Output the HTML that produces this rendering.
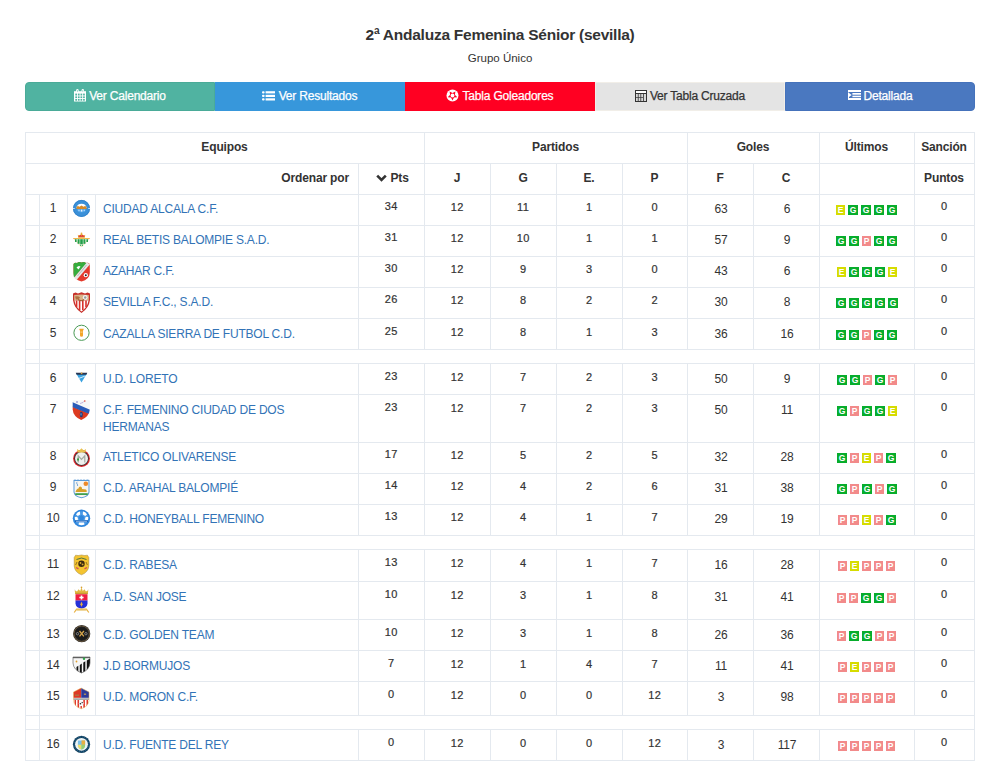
<!DOCTYPE html>
<html><head><meta charset="utf-8">
<style>
html,body{margin:0;padding:0;background:#fff;}
body{width:993px;height:764px;position:relative;overflow:hidden;font-family:"Liberation Sans",sans-serif;color:#333;}
.title{position:absolute;left:25px;width:950px;top:25px;text-align:center;font-weight:bold;font-size:15.5px;letter-spacing:-0.25px;line-height:20px;color:#333;}
.sub{position:absolute;left:25px;width:950px;top:50px;text-align:center;font-size:11.5px;line-height:16px;color:#333;}
.btn{position:absolute;top:82px;height:29px;width:190px;box-sizing:border-box;color:#fff;font-size:12px;letter-spacing:-0.2px;line-height:26px;text-align:center;border:1px solid;white-space:nowrap;-webkit-text-stroke:0.25px currentColor;}
.btn svg{vertical-align:middle;position:relative;top:-1px;margin-right:3px;}
.hl{position:absolute;height:1px;background:#e4e9ef;}
.vl{position:absolute;width:1px;background:#e4e9ef;}
.th,.td,.rn{position:absolute;white-space:nowrap;}
.th{font-weight:bold;font-size:12px;letter-spacing:-0.15px;line-height:14px;color:#333;}
.td{font-size:12px;letter-spacing:-0.2px;line-height:14px;color:#333;}
.nm{position:absolute;font-size:12px;letter-spacing:-0.2px;line-height:17px;padding:0 8px 0 8px;box-sizing:border-box;color:#3273b6;}
.rn{font-size:11px;letter-spacing:0.5px;padding-left:0.5px;box-sizing:border-box;line-height:14px;color:#333;-webkit-text-stroke:0.2px #333;}
.c{text-align:center;}
.r{text-align:right;}
.bd{position:absolute;width:9px;height:10px;color:#fff;font-weight:bold;font-size:8.5px;line-height:10px;text-align:center;}
.logo{position:absolute;left:67px;width:28px;}
.chev{vertical-align:middle;position:relative;top:-1px;}
</style></head><body>
<div class="title">2ª Andaluza Femenina Sénior (sevilla)</div>
<div class="sub">Grupo Único</div>
<div class="btn" style="left:25px;background:#50b3a1;border-color:#4aab98;border-radius:4px 0 0 4px;"><svg width="12" height="13" viewBox="0 0 12 13"><path d="M0 2.2 H12 V12.5 H0Z" fill="#fff"/><g fill="#50b3a1"><rect x="1.3" y="4.6" width="1.7" height="1.9"/><rect x="3.9" y="4.6" width="1.7" height="1.9"/><rect x="6.5" y="4.6" width="1.7" height="1.9"/><rect x="9.1" y="4.6" width="1.7" height="1.9"/><rect x="1.3" y="7.4" width="1.7" height="1.6"/><rect x="3.9" y="7.4" width="1.7" height="1.6"/><rect x="6.5" y="7.4" width="1.7" height="1.6"/><rect x="9.1" y="7.4" width="1.7" height="1.6"/><rect x="1.3" y="9.9" width="1.7" height="1.8"/><rect x="3.9" y="9.9" width="1.7" height="1.8"/><rect x="6.5" y="9.9" width="1.7" height="1.8"/><rect x="9.1" y="9.9" width="1.7" height="1.8"/></g><rect x="2.2" y="0" width="2.4" height="3.6" rx="1.2" fill="#fff"/><rect x="7.6" y="0" width="2.4" height="3.6" rx="1.2" fill="#fff"/><rect x="3" y="1" width="0.8" height="1.8" fill="#8fd0c4"/><rect x="8.4" y="1" width="0.8" height="1.8" fill="#8fd0c4"/></svg>Ver Calendario</div>
<div class="btn" style="left:215px;background:#3797db;border-color:#3797db;"><svg width="13" height="10" viewBox="0 0 13 10" style="top:-1px;left:-1px"><g fill="#fff"><rect x="0" y="0.2" width="2.6" height="2.2" rx="1"/><rect x="0" y="3.8" width="2.6" height="2.2" rx="1"/><rect x="0" y="7.3" width="2.6" height="2.2" rx="1"/><rect x="3.6" y="0.2" width="9.4" height="2.2"/><rect x="3.6" y="3.8" width="9.4" height="2.2"/><rect x="3.6" y="7.3" width="9.4" height="2.2"/></g></svg>Ver Resultados</div>
<div class="btn" style="left:405px;background:#ff0022;border-color:#ff0022;"><svg width="13" height="13" viewBox="0 0 13 13" style="left:-1px"><circle cx="6.5" cy="6.5" r="6" fill="#fff"/><path d="M6.50 11.60 L5.03 8.62 L1.74 8.15 L4.12 5.83 L3.56 2.55 L6.50 4.10 L9.44 2.55 L8.88 5.83 L11.26 8.15 L7.97 8.62Z" fill="#ff0022"/><circle cx="6.5" cy="6.5" r="1.9" fill="#fff"/></svg>Tabla Goleadores</div>
<div class="btn" style="left:595px;background:#e4e4e4;border-color:#f1eee8;color:#333;"><svg width="12" height="12" viewBox="0 0 12 12"><rect x="0" y="0" width="12" height="12" fill="#333"/><rect x="1" y="1" width="10" height="2" fill="#fff"/><g fill="#d8d8d8"><rect x="1" y="4" width="1.8" height="3.3"/><rect x="3.6" y="4" width="1.8" height="3.3"/><rect x="6.2" y="4" width="1.8" height="3.3"/><rect x="8.8" y="4" width="2.2" height="7"/><rect x="1" y="8" width="1.8" height="3"/><rect x="3.6" y="8" width="1.8" height="3"/><rect x="6.2" y="8" width="1.8" height="3"/></g></svg>Ver Tabla Cruzada</div>
<div class="btn" style="left:785px;background:#4a78c0;border-color:#4572bb;border-radius:0 4px 4px 0;"><svg width="13" height="10" viewBox="0 0 13 10" style="top:-1.5px"><g fill="#fff"><rect x="0" y="0" width="13" height="2"/><rect x="4.4" y="3" width="8.6" height="1.7"/><rect x="4.4" y="5.7" width="8.6" height="1.5"/><rect x="0" y="8" width="13" height="2"/><rect x="0" y="2.5" width="1" height="5.5"/><path d="M1 3 L3.6 5 L1 7Z"/></g></svg>Detallada</div>
<div class="hl" style="top:132px;left:25px;width:950px"></div>
<div class="hl" style="top:163px;left:25px;width:950px"></div>
<div class="hl" style="top:194px;left:25px;width:950px"></div>
<div class="vl" style="left:25px;top:132px;height:32px"></div>
<div class="vl" style="left:424px;top:132px;height:32px"></div>
<div class="vl" style="left:687px;top:132px;height:32px"></div>
<div class="vl" style="left:819px;top:132px;height:32px"></div>
<div class="vl" style="left:914px;top:132px;height:32px"></div>
<div class="vl" style="left:974px;top:132px;height:32px"></div>
<div class="vl" style="left:25px;top:163px;height:32px"></div>
<div class="vl" style="left:358px;top:163px;height:32px"></div>
<div class="vl" style="left:424px;top:163px;height:32px"></div>
<div class="vl" style="left:490px;top:163px;height:32px"></div>
<div class="vl" style="left:556px;top:163px;height:32px"></div>
<div class="vl" style="left:622px;top:163px;height:32px"></div>
<div class="vl" style="left:687px;top:163px;height:32px"></div>
<div class="vl" style="left:753px;top:163px;height:32px"></div>
<div class="vl" style="left:819px;top:163px;height:32px"></div>
<div class="vl" style="left:914px;top:163px;height:32px"></div>
<div class="vl" style="left:974px;top:163px;height:32px"></div>
<div class="th c" style="left:25px;width:399px;top:140px;">Equipos</div>
<div class="th c" style="left:424px;width:263px;top:140px;">Partidos</div>
<div class="th c" style="left:687px;width:132px;top:140px;">Goles</div>
<div class="th c" style="left:819px;width:95px;top:140px;">Últimos</div>
<div class="th c" style="left:914px;width:60px;top:140px;">Sanción</div>
<div class="th r" style="left:25px;width:333px;top:171px;padding-right:9px;box-sizing:border-box;">Ordenar por</div>
<div class="th c" style="left:358px;width:66px;top:171px;padding-left:2px;box-sizing:border-box;"><svg class="chev" width="11" height="8" viewBox="0 0 11 8" style="margin-right:1px;left:1px"><path d="M1.2 1.6 L5.5 5.9 L9.8 1.6" fill="none" stroke="#333" stroke-width="2.6"/></svg> Pts</div>
<div class="th c" style="left:424px;width:66px;top:171px;">J</div>
<div class="th c" style="left:490px;width:66px;top:171px;">G</div>
<div class="th c" style="left:556px;width:66px;top:171px;">E.</div>
<div class="th c" style="left:622px;width:65px;top:171px;">P</div>
<div class="th c" style="left:687px;width:66px;top:171px;">F</div>
<div class="th c" style="left:753px;width:66px;top:171px;">C</div>
<div class="th c" style="left:914px;width:60px;top:171px;">Puntos</div>
<div class="hl" style="top:225px;left:25px;width:950px"></div>
<div class="vl" style="left:25px;top:194px;height:32px"></div>
<div class="vl" style="left:39px;top:194px;height:32px"></div>
<div class="vl" style="left:67px;top:194px;height:32px"></div>
<div class="vl" style="left:95px;top:194px;height:32px"></div>
<div class="vl" style="left:358px;top:194px;height:32px"></div>
<div class="vl" style="left:424px;top:194px;height:32px"></div>
<div class="vl" style="left:490px;top:194px;height:32px"></div>
<div class="vl" style="left:556px;top:194px;height:32px"></div>
<div class="vl" style="left:622px;top:194px;height:32px"></div>
<div class="vl" style="left:687px;top:194px;height:32px"></div>
<div class="vl" style="left:753px;top:194px;height:32px"></div>
<div class="vl" style="left:819px;top:194px;height:32px"></div>
<div class="vl" style="left:914px;top:194px;height:32px"></div>
<div class="vl" style="left:974px;top:194px;height:32px"></div>
<div class="td c" style="left:39px;width:28px;top:201px;">1</div>
<div class="nm" style="left:95px;width:263px;top:201px;">CIUDAD ALCALA C.F.</div>
<div class="rn c" style="left:358px;width:66px;top:199px;">34</div>
<div class="rn c" style="left:424px;width:66px;top:200px;">12</div>
<div class="rn c" style="left:490px;width:66px;top:200px;">11</div>
<div class="rn c" style="left:556px;width:66px;top:200px;">1</div>
<div class="rn c" style="left:622px;width:65px;top:200px;">0</div>
<div class="td c" style="left:688px;width:66px;top:202px;">63</div>
<div class="td c" style="left:754px;width:66px;top:202px;">6</div>
<div class="rn c" style="left:914px;width:60px;top:199px;">0</div>
<div class="bd" style="left:836px;width:9px;top:205px;background:#d6dc00">E</div>
<div class="bd" style="left:848px;width:10px;top:205px;background:#07ad2c">G</div>
<div class="bd" style="left:861px;width:10px;top:205px;background:#07ad2c">G</div>
<div class="bd" style="left:874px;width:10px;top:205px;background:#07ad2c">G</div>
<div class="bd" style="left:887px;width:10px;top:205px;background:#07ad2c">G</div>
<svg class="logo" style="top:194px" width="28" height="31" viewBox="0 0 28 31"><circle cx="14.5" cy="14.4" r="8.5" fill="#3a90d8"/><circle cx="14.5" cy="14.4" r="8" fill="none" stroke="#2f7fc8" stroke-width="0.8"/><path d="M9.3 14 A5.3 5.3 0 0 1 19.7 14Z" fill="#fff"/><path d="M9.5 12.8 L11 12 L12.5 12.8 L14.5 11.4 L16.5 12.8 L18 12 L19.5 12.8 V15.2 H9.5Z" fill="#d48a2a"/><path d="M9.6 15.2 H19.4 A5.1 4.6 0 0 1 9.6 15.2Z" fill="#4aa0e8"/><rect x="13.8" y="15.6" width="1.6" height="2" fill="#eaf4ff"/><rect x="11.4" y="15.6" width="1.2" height="1.6" fill="#bfe0ff"/><rect x="16.6" y="15.6" width="1.2" height="1.6" fill="#bfe0ff"/><rect x="5.8" y="14" width="2" height="0.8" fill="#e8f3ff"/><rect x="21.2" y="14" width="2" height="0.8" fill="#e8f3ff"/></svg>
<div class="hl" style="top:256px;left:25px;width:950px"></div>
<div class="vl" style="left:25px;top:225px;height:32px"></div>
<div class="vl" style="left:39px;top:225px;height:32px"></div>
<div class="vl" style="left:67px;top:225px;height:32px"></div>
<div class="vl" style="left:95px;top:225px;height:32px"></div>
<div class="vl" style="left:358px;top:225px;height:32px"></div>
<div class="vl" style="left:424px;top:225px;height:32px"></div>
<div class="vl" style="left:490px;top:225px;height:32px"></div>
<div class="vl" style="left:556px;top:225px;height:32px"></div>
<div class="vl" style="left:622px;top:225px;height:32px"></div>
<div class="vl" style="left:687px;top:225px;height:32px"></div>
<div class="vl" style="left:753px;top:225px;height:32px"></div>
<div class="vl" style="left:819px;top:225px;height:32px"></div>
<div class="vl" style="left:914px;top:225px;height:32px"></div>
<div class="vl" style="left:974px;top:225px;height:32px"></div>
<div class="td c" style="left:39px;width:28px;top:232px;">2</div>
<div class="nm" style="left:95px;width:263px;top:232px;">REAL BETIS BALOMPIE S.A.D.</div>
<div class="rn c" style="left:358px;width:66px;top:230px;">31</div>
<div class="rn c" style="left:424px;width:66px;top:231px;">12</div>
<div class="rn c" style="left:490px;width:66px;top:231px;">10</div>
<div class="rn c" style="left:556px;width:66px;top:231px;">1</div>
<div class="rn c" style="left:622px;width:65px;top:231px;">1</div>
<div class="td c" style="left:688px;width:66px;top:233px;">57</div>
<div class="td c" style="left:754px;width:66px;top:233px;">9</div>
<div class="rn c" style="left:914px;width:60px;top:230px;">0</div>
<div class="bd" style="left:836px;width:10px;top:236px;background:#07ad2c">G</div>
<div class="bd" style="left:849px;width:10px;top:236px;background:#07ad2c">G</div>
<div class="bd" style="left:862px;width:9px;top:236px;background:#f28a8a">P</div>
<div class="bd" style="left:874px;width:10px;top:236px;background:#07ad2c">G</div>
<div class="bd" style="left:887px;width:10px;top:236px;background:#07ad2c">G</div>
<svg class="logo" style="top:225px" width="28" height="31" viewBox="0 0 28 31"><path d="M11.2 12.8 L10.8 9.8 L12.5 10.8 L14.5 8.2 L16.5 10.8 L18.2 9.8 L17.8 12.8Z" fill="#e8a030"/><path d="M11.5 11.8 Q12.8 8.8 14.5 11 Q16.2 8.8 17.5 11.8Z" fill="#e02a3a"/><circle cx="14.5" cy="8.3" r="0.9" fill="#e8b040"/><path d="M6 13 H23 L14.5 22Z" fill="#f7f4ec"/><path d="M6 13 H23 V14 H6Z" fill="#f0b850"/><path d="M6 13 L14.5 22 L23 13" fill="none" stroke="#f3cf8a" stroke-width="0.6"/><g fill="#22a04a"><rect x="8" y="14.2" width="1.6" height="2.8"/><rect x="10.6" y="14.2" width="2" height="4.6"/><rect x="13.2" y="14.2" width="2.6" height="5"/><rect x="16.4" y="14.2" width="2" height="4.6"/><rect x="19.4" y="14.2" width="1.6" height="2.8"/><rect x="13.2" y="19.6" width="0.9" height="1.4"/><rect x="14.9" y="19.6" width="0.9" height="1.4"/></g></svg>
<div class="hl" style="top:287px;left:25px;width:950px"></div>
<div class="vl" style="left:25px;top:256px;height:32px"></div>
<div class="vl" style="left:39px;top:256px;height:32px"></div>
<div class="vl" style="left:67px;top:256px;height:32px"></div>
<div class="vl" style="left:95px;top:256px;height:32px"></div>
<div class="vl" style="left:358px;top:256px;height:32px"></div>
<div class="vl" style="left:424px;top:256px;height:32px"></div>
<div class="vl" style="left:490px;top:256px;height:32px"></div>
<div class="vl" style="left:556px;top:256px;height:32px"></div>
<div class="vl" style="left:622px;top:256px;height:32px"></div>
<div class="vl" style="left:687px;top:256px;height:32px"></div>
<div class="vl" style="left:753px;top:256px;height:32px"></div>
<div class="vl" style="left:819px;top:256px;height:32px"></div>
<div class="vl" style="left:914px;top:256px;height:32px"></div>
<div class="vl" style="left:974px;top:256px;height:32px"></div>
<div class="td c" style="left:39px;width:28px;top:263px;">3</div>
<div class="nm" style="left:95px;width:263px;top:263px;">AZAHAR C.F.</div>
<div class="rn c" style="left:358px;width:66px;top:261px;">30</div>
<div class="rn c" style="left:424px;width:66px;top:262px;">12</div>
<div class="rn c" style="left:490px;width:66px;top:262px;">9</div>
<div class="rn c" style="left:556px;width:66px;top:262px;">3</div>
<div class="rn c" style="left:622px;width:65px;top:262px;">0</div>
<div class="td c" style="left:688px;width:66px;top:264px;">43</div>
<div class="td c" style="left:754px;width:66px;top:264px;">6</div>
<div class="rn c" style="left:914px;width:60px;top:261px;">0</div>
<div class="bd" style="left:837px;width:9px;top:267px;background:#d6dc00">E</div>
<div class="bd" style="left:849px;width:10px;top:267px;background:#07ad2c">G</div>
<div class="bd" style="left:862px;width:10px;top:267px;background:#07ad2c">G</div>
<div class="bd" style="left:875px;width:10px;top:267px;background:#07ad2c">G</div>
<div class="bd" style="left:888px;width:9px;top:267px;background:#d6dc00">E</div>
<svg class="logo" style="top:256px" width="28" height="31" viewBox="0 0 28 31"><path d="M6.5 8 Q8 6 10 7 Q12 5.5 14.5 6.5 Q17 5.5 19 7 Q21 6 22.8 8 V17 Q22.5 23.5 14.5 25.5 Q6.5 23.5 6.5 17Z" fill="#e43a2c"/><path d="M6.5 8 Q8 6 10 7 Q12 5.5 14.5 6.5 Q17 5.5 19 7 L20.5 6.8 L7 21.5 Q6.5 19.5 6.5 17Z" fill="#35ad3e"/><path d="M19.8 6.5 L23 8.2 L9.5 24 L7 21.8Z" fill="#e6e6e6"/><path d="M19.5 9 L10.5 20" stroke="#777" stroke-width="0.7" stroke-dasharray="0.8 0.6"/><circle cx="18.8" cy="19.2" r="2.1" fill="#fff"/><circle cx="18.8" cy="19.2" r="1" fill="#222"/><path d="M9.5 11.5 Q11.5 9 13.5 10.5 L11.5 13.5Z" fill="#fff"/></svg>
<div class="hl" style="top:318px;left:25px;width:950px"></div>
<div class="vl" style="left:25px;top:287px;height:32px"></div>
<div class="vl" style="left:39px;top:287px;height:32px"></div>
<div class="vl" style="left:67px;top:287px;height:32px"></div>
<div class="vl" style="left:95px;top:287px;height:32px"></div>
<div class="vl" style="left:358px;top:287px;height:32px"></div>
<div class="vl" style="left:424px;top:287px;height:32px"></div>
<div class="vl" style="left:490px;top:287px;height:32px"></div>
<div class="vl" style="left:556px;top:287px;height:32px"></div>
<div class="vl" style="left:622px;top:287px;height:32px"></div>
<div class="vl" style="left:687px;top:287px;height:32px"></div>
<div class="vl" style="left:753px;top:287px;height:32px"></div>
<div class="vl" style="left:819px;top:287px;height:32px"></div>
<div class="vl" style="left:914px;top:287px;height:32px"></div>
<div class="vl" style="left:974px;top:287px;height:32px"></div>
<div class="td c" style="left:39px;width:28px;top:294px;">4</div>
<div class="nm" style="left:95px;width:263px;top:294px;">SEVILLA F.C., S.A.D.</div>
<div class="rn c" style="left:358px;width:66px;top:292px;">26</div>
<div class="rn c" style="left:424px;width:66px;top:293px;">12</div>
<div class="rn c" style="left:490px;width:66px;top:293px;">8</div>
<div class="rn c" style="left:556px;width:66px;top:293px;">2</div>
<div class="rn c" style="left:622px;width:65px;top:293px;">2</div>
<div class="td c" style="left:688px;width:66px;top:295px;">30</div>
<div class="td c" style="left:754px;width:66px;top:295px;">8</div>
<div class="rn c" style="left:914px;width:60px;top:292px;">0</div>
<div class="bd" style="left:836px;width:10px;top:298px;background:#07ad2c">G</div>
<div class="bd" style="left:849px;width:10px;top:298px;background:#07ad2c">G</div>
<div class="bd" style="left:862px;width:10px;top:298px;background:#07ad2c">G</div>
<div class="bd" style="left:875px;width:10px;top:298px;background:#07ad2c">G</div>
<div class="bd" style="left:888px;width:10px;top:298px;background:#07ad2c">G</div>
<svg class="logo" style="top:287px" width="28" height="31" viewBox="0 0 28 31"><path d="M6 6.5 L8.5 5.5 L11 6.5 L14.5 5.3 L18 6.5 L20.5 5.5 L23 6.5 V13 Q22 21 14.5 26 Q7 21 6 13Z" fill="#c7302a"/><path d="M7.2 8 Q14.5 7 21.8 8 V13.5 H7.2Z" fill="#d9b48a"/><path d="M8 9.5 Q11 8.5 13 10.5 Q12 13 9 12.5Z" fill="#b07040"/><circle cx="18.2" cy="10.5" r="2.4" fill="#f2f2f2"/><circle cx="18.2" cy="10.5" r="1.2" fill="#999"/><path d="M7.5 13.5 H21.5 Q20.5 20 14.5 24.5 Q8.5 20 7.5 13.5Z" fill="#fff"/><g fill="#d9322c"><rect x="8.8" y="13.5" width="1.6" height="6.5"/><rect x="11.8" y="13.5" width="1.6" height="9.5"/><rect x="15" y="13.5" width="1.6" height="9.5"/><rect x="18.2" y="13.5" width="1.6" height="6.5"/></g><path d="M11 12.5 Q14.5 15 17 12.5" stroke="#a05a30" stroke-width="1.2" fill="none"/></svg>
<div class="hl" style="top:349px;left:25px;width:950px"></div>
<div class="vl" style="left:25px;top:318px;height:32px"></div>
<div class="vl" style="left:39px;top:318px;height:32px"></div>
<div class="vl" style="left:67px;top:318px;height:32px"></div>
<div class="vl" style="left:95px;top:318px;height:32px"></div>
<div class="vl" style="left:358px;top:318px;height:32px"></div>
<div class="vl" style="left:424px;top:318px;height:32px"></div>
<div class="vl" style="left:490px;top:318px;height:32px"></div>
<div class="vl" style="left:556px;top:318px;height:32px"></div>
<div class="vl" style="left:622px;top:318px;height:32px"></div>
<div class="vl" style="left:687px;top:318px;height:32px"></div>
<div class="vl" style="left:753px;top:318px;height:32px"></div>
<div class="vl" style="left:819px;top:318px;height:32px"></div>
<div class="vl" style="left:914px;top:318px;height:32px"></div>
<div class="vl" style="left:974px;top:318px;height:32px"></div>
<div class="td c" style="left:39px;width:28px;top:326px;">5</div>
<div class="nm" style="left:95px;width:263px;top:326px;">CAZALLA SIERRA DE FUTBOL C.D.</div>
<div class="rn c" style="left:358px;width:66px;top:324px;">25</div>
<div class="rn c" style="left:424px;width:66px;top:325px;">12</div>
<div class="rn c" style="left:490px;width:66px;top:325px;">8</div>
<div class="rn c" style="left:556px;width:66px;top:325px;">1</div>
<div class="rn c" style="left:622px;width:65px;top:325px;">3</div>
<div class="td c" style="left:688px;width:66px;top:327px;">36</div>
<div class="td c" style="left:754px;width:66px;top:327px;">16</div>
<div class="rn c" style="left:914px;width:60px;top:324px;">0</div>
<div class="bd" style="left:836px;width:10px;top:330px;background:#07ad2c">G</div>
<div class="bd" style="left:849px;width:10px;top:330px;background:#07ad2c">G</div>
<div class="bd" style="left:862px;width:9px;top:330px;background:#f28a8a">P</div>
<div class="bd" style="left:874px;width:10px;top:330px;background:#07ad2c">G</div>
<div class="bd" style="left:887px;width:10px;top:330px;background:#07ad2c">G</div>
<svg class="logo" style="top:318px" width="28" height="31" viewBox="0 0 28 31"><circle cx="14.5" cy="14.8" r="7.6" fill="#fff" stroke="#4a9a55" stroke-width="1"/><path d="M12.4 10.8 H16.6 V12 L16 12.6 V17.6 Q16 18.8 14.5 18.8 Q13 18.8 13 17.6 V12.6 L12.4 12Z" fill="#f3a52a"/><rect x="13.5" y="13.5" width="2" height="1.2" fill="#f8d080"/></svg>
<div class="hl" style="top:363px;left:25px;width:950px"></div>
<div class="vl" style="left:25px;top:349px;height:15px"></div>
<div class="vl" style="left:39px;top:349px;height:15px"></div>
<div class="vl" style="left:974px;top:349px;height:15px"></div>
<div class="hl" style="top:394px;left:25px;width:950px"></div>
<div class="vl" style="left:25px;top:363px;height:32px"></div>
<div class="vl" style="left:39px;top:363px;height:32px"></div>
<div class="vl" style="left:67px;top:363px;height:32px"></div>
<div class="vl" style="left:95px;top:363px;height:32px"></div>
<div class="vl" style="left:358px;top:363px;height:32px"></div>
<div class="vl" style="left:424px;top:363px;height:32px"></div>
<div class="vl" style="left:490px;top:363px;height:32px"></div>
<div class="vl" style="left:556px;top:363px;height:32px"></div>
<div class="vl" style="left:622px;top:363px;height:32px"></div>
<div class="vl" style="left:687px;top:363px;height:32px"></div>
<div class="vl" style="left:753px;top:363px;height:32px"></div>
<div class="vl" style="left:819px;top:363px;height:32px"></div>
<div class="vl" style="left:914px;top:363px;height:32px"></div>
<div class="vl" style="left:974px;top:363px;height:32px"></div>
<div class="td c" style="left:39px;width:28px;top:371px;">6</div>
<div class="nm" style="left:95px;width:263px;top:371px;">U.D. LORETO</div>
<div class="rn c" style="left:358px;width:66px;top:369px;">23</div>
<div class="rn c" style="left:424px;width:66px;top:370px;">12</div>
<div class="rn c" style="left:490px;width:66px;top:370px;">7</div>
<div class="rn c" style="left:556px;width:66px;top:370px;">2</div>
<div class="rn c" style="left:622px;width:65px;top:370px;">3</div>
<div class="td c" style="left:688px;width:66px;top:372px;">50</div>
<div class="td c" style="left:754px;width:66px;top:372px;">9</div>
<div class="rn c" style="left:914px;width:60px;top:369px;">0</div>
<div class="bd" style="left:837px;width:10px;top:375px;background:#07ad2c">G</div>
<div class="bd" style="left:850px;width:10px;top:375px;background:#07ad2c">G</div>
<div class="bd" style="left:863px;width:9px;top:375px;background:#f28a8a">P</div>
<div class="bd" style="left:875px;width:10px;top:375px;background:#07ad2c">G</div>
<div class="bd" style="left:888px;width:9px;top:375px;background:#f28a8a">P</div>
<svg class="logo" style="top:363px" width="28" height="31" viewBox="0 0 28 31"><path d="M8.8 10 H20.2 L14.5 19.6Z" fill="#3aa2e0"/><path d="M8.8 9.8 H20.2 L19.4 11.8 H9.6Z" fill="#2a3550"/><rect x="13.8" y="9.5" width="1.6" height="1.6" fill="#d9a040"/><path d="M11.5 15.5 L17.8 13.2" stroke="#e8f6ff" stroke-width="0.9"/></svg>
<div class="hl" style="top:442px;left:25px;width:950px"></div>
<div class="vl" style="left:25px;top:394px;height:49px"></div>
<div class="vl" style="left:39px;top:394px;height:49px"></div>
<div class="vl" style="left:67px;top:394px;height:49px"></div>
<div class="vl" style="left:95px;top:394px;height:49px"></div>
<div class="vl" style="left:358px;top:394px;height:49px"></div>
<div class="vl" style="left:424px;top:394px;height:49px"></div>
<div class="vl" style="left:490px;top:394px;height:49px"></div>
<div class="vl" style="left:556px;top:394px;height:49px"></div>
<div class="vl" style="left:622px;top:394px;height:49px"></div>
<div class="vl" style="left:687px;top:394px;height:49px"></div>
<div class="vl" style="left:753px;top:394px;height:49px"></div>
<div class="vl" style="left:819px;top:394px;height:49px"></div>
<div class="vl" style="left:914px;top:394px;height:49px"></div>
<div class="vl" style="left:974px;top:394px;height:49px"></div>
<div class="td c" style="left:39px;width:28px;top:402px;">7</div>
<div class="nm" style="left:95px;width:263px;top:402px;">C.F. FEMENINO CIUDAD DE DOS HERMANAS</div>
<div class="rn c" style="left:358px;width:66px;top:400px;">23</div>
<div class="rn c" style="left:424px;width:66px;top:401px;">12</div>
<div class="rn c" style="left:490px;width:66px;top:401px;">7</div>
<div class="rn c" style="left:556px;width:66px;top:401px;">2</div>
<div class="rn c" style="left:622px;width:65px;top:401px;">3</div>
<div class="td c" style="left:688px;width:66px;top:403px;">50</div>
<div class="td c" style="left:754px;width:66px;top:403px;">11</div>
<div class="rn c" style="left:914px;width:60px;top:400px;">0</div>
<div class="bd" style="left:837px;width:10px;top:406px;background:#07ad2c">G</div>
<div class="bd" style="left:850px;width:9px;top:406px;background:#f28a8a">P</div>
<div class="bd" style="left:862px;width:10px;top:406px;background:#07ad2c">G</div>
<div class="bd" style="left:875px;width:10px;top:406px;background:#07ad2c">G</div>
<div class="bd" style="left:888px;width:9px;top:406px;background:#d6dc00">E</div>
<svg class="logo" style="top:394px" width="28" height="48" viewBox="0 0 28 48"><defs><clipPath id="cdosh"><path d="M5.7 6.2 H22.8 V15.5 Q22.3 22.5 14.2 26 Q6.2 22.5 5.7 15.5Z"/></clipPath></defs><g clip-path="url(#cdosh)"><rect x="5" y="5" width="19" height="22" fill="#f7f7f7"/><path d="M5 12.6 L24 20.2 V27 H5Z" fill="#dc3a20"/><path d="M5 7.9 L24 16.2 V20.6 L5 13Z" fill="#2a5cb8"/></g><ellipse cx="14.3" cy="20.5" rx="1.5" ry="2.8" fill="#1f3a78"/><ellipse cx="14" cy="20.2" rx="0.5" ry="1.5" fill="#6f9fe0"/><circle cx="10" cy="8" r="0.7" fill="#4a4aa8"/><path d="M13 9.5 L16 8.5 L17.5 7" stroke="#9a8acc" stroke-width="0.6" fill="none"/><circle cx="17.8" cy="7" r="0.8" fill="#e04030"/></svg>
<div class="hl" style="top:473px;left:25px;width:950px"></div>
<div class="vl" style="left:25px;top:442px;height:32px"></div>
<div class="vl" style="left:39px;top:442px;height:32px"></div>
<div class="vl" style="left:67px;top:442px;height:32px"></div>
<div class="vl" style="left:95px;top:442px;height:32px"></div>
<div class="vl" style="left:358px;top:442px;height:32px"></div>
<div class="vl" style="left:424px;top:442px;height:32px"></div>
<div class="vl" style="left:490px;top:442px;height:32px"></div>
<div class="vl" style="left:556px;top:442px;height:32px"></div>
<div class="vl" style="left:622px;top:442px;height:32px"></div>
<div class="vl" style="left:687px;top:442px;height:32px"></div>
<div class="vl" style="left:753px;top:442px;height:32px"></div>
<div class="vl" style="left:819px;top:442px;height:32px"></div>
<div class="vl" style="left:914px;top:442px;height:32px"></div>
<div class="vl" style="left:974px;top:442px;height:32px"></div>
<div class="td c" style="left:39px;width:28px;top:449px;">8</div>
<div class="nm" style="left:95px;width:263px;top:449px;">ATLETICO OLIVARENSE</div>
<div class="rn c" style="left:358px;width:66px;top:447px;">17</div>
<div class="rn c" style="left:424px;width:66px;top:448px;">12</div>
<div class="rn c" style="left:490px;width:66px;top:448px;">5</div>
<div class="rn c" style="left:556px;width:66px;top:448px;">2</div>
<div class="rn c" style="left:622px;width:65px;top:448px;">5</div>
<div class="td c" style="left:688px;width:66px;top:450px;">32</div>
<div class="td c" style="left:754px;width:66px;top:450px;">28</div>
<div class="rn c" style="left:914px;width:60px;top:447px;">0</div>
<div class="bd" style="left:837px;width:10px;top:453px;background:#07ad2c">G</div>
<div class="bd" style="left:850px;width:9px;top:453px;background:#f28a8a">P</div>
<div class="bd" style="left:862px;width:9px;top:453px;background:#d6dc00">E</div>
<div class="bd" style="left:874px;width:9px;top:453px;background:#f28a8a">P</div>
<div class="bd" style="left:886px;width:10px;top:453px;background:#07ad2c">G</div>
<svg class="logo" style="top:442px" width="28" height="31" viewBox="0 0 28 31"><circle cx="14.5" cy="16.5" r="8.4" fill="#e0262c"/><circle cx="14.5" cy="16.5" r="7.3" fill="#333"/><circle cx="14.5" cy="16.5" r="6.5" fill="#eef0ee"/><path d="M11.2 20.5 V13.8 L14.5 17.3 L17.8 13.8 V20.5" stroke="#a4aaa2" stroke-width="1.2" fill="none"/><path d="M10 17.5 L11 15.5 L12 17.5 L11 19.5Z" fill="#2a9a3a"/><path d="M10.5 10.5 L10 7 L12.3 8.6 L14.5 6.3 L16.7 8.6 L19 7 L18.5 10.5Z" fill="#e8c050"/></svg>
<div class="hl" style="top:504px;left:25px;width:950px"></div>
<div class="vl" style="left:25px;top:473px;height:32px"></div>
<div class="vl" style="left:39px;top:473px;height:32px"></div>
<div class="vl" style="left:67px;top:473px;height:32px"></div>
<div class="vl" style="left:95px;top:473px;height:32px"></div>
<div class="vl" style="left:358px;top:473px;height:32px"></div>
<div class="vl" style="left:424px;top:473px;height:32px"></div>
<div class="vl" style="left:490px;top:473px;height:32px"></div>
<div class="vl" style="left:556px;top:473px;height:32px"></div>
<div class="vl" style="left:622px;top:473px;height:32px"></div>
<div class="vl" style="left:687px;top:473px;height:32px"></div>
<div class="vl" style="left:753px;top:473px;height:32px"></div>
<div class="vl" style="left:819px;top:473px;height:32px"></div>
<div class="vl" style="left:914px;top:473px;height:32px"></div>
<div class="vl" style="left:974px;top:473px;height:32px"></div>
<div class="td c" style="left:39px;width:28px;top:480px;">9</div>
<div class="nm" style="left:95px;width:263px;top:480px;">C.D. ARAHAL BALOMPIÉ</div>
<div class="rn c" style="left:358px;width:66px;top:478px;">14</div>
<div class="rn c" style="left:424px;width:66px;top:479px;">12</div>
<div class="rn c" style="left:490px;width:66px;top:479px;">4</div>
<div class="rn c" style="left:556px;width:66px;top:479px;">2</div>
<div class="rn c" style="left:622px;width:65px;top:479px;">6</div>
<div class="td c" style="left:688px;width:66px;top:481px;">31</div>
<div class="td c" style="left:754px;width:66px;top:481px;">38</div>
<div class="rn c" style="left:914px;width:60px;top:478px;">0</div>
<div class="bd" style="left:837px;width:10px;top:484px;background:#07ad2c">G</div>
<div class="bd" style="left:850px;width:9px;top:484px;background:#f28a8a">P</div>
<div class="bd" style="left:862px;width:10px;top:484px;background:#07ad2c">G</div>
<div class="bd" style="left:875px;width:9px;top:484px;background:#f28a8a">P</div>
<div class="bd" style="left:887px;width:10px;top:484px;background:#07ad2c">G</div>
<svg class="logo" style="top:473px" width="28" height="31" viewBox="0 0 28 31"><path d="M6.5 7 Q8 6.2 9.5 7 Q11 6.2 12.5 7 Q14 6.2 15.5 7 Q17 6.2 18.5 7 Q20 6.2 22.5 7 V19 Q22.3 23.8 14.5 25.2 Q6.7 23.8 6.5 19Z" fill="#5a9ad8"/><path d="M7.5 8 H21.5 V19 Q21.3 23 14.5 24.2 Q7.7 23 7.5 19Z" fill="#f8f6f0"/><circle cx="18.8" cy="10.8" r="2.3" fill="#ee8a2a"/><path d="M10.5 8.8 Q9 9.5 10 11 Q11.5 12 10.3 13" stroke="#6a9fd8" stroke-width="0.9" fill="none"/><path d="M8.5 19 Q9.5 15.5 11.5 15.5 Q11.5 13.5 13.5 13.5 Q15.5 14 15 16 L19 16.5 Q20.5 18 19.5 19Z" fill="#d8a028"/><rect x="8.2" y="20.2" width="12.6" height="1.8" fill="#40a050"/></svg>
<div class="hl" style="top:535px;left:25px;width:950px"></div>
<div class="vl" style="left:25px;top:504px;height:32px"></div>
<div class="vl" style="left:39px;top:504px;height:32px"></div>
<div class="vl" style="left:67px;top:504px;height:32px"></div>
<div class="vl" style="left:95px;top:504px;height:32px"></div>
<div class="vl" style="left:358px;top:504px;height:32px"></div>
<div class="vl" style="left:424px;top:504px;height:32px"></div>
<div class="vl" style="left:490px;top:504px;height:32px"></div>
<div class="vl" style="left:556px;top:504px;height:32px"></div>
<div class="vl" style="left:622px;top:504px;height:32px"></div>
<div class="vl" style="left:687px;top:504px;height:32px"></div>
<div class="vl" style="left:753px;top:504px;height:32px"></div>
<div class="vl" style="left:819px;top:504px;height:32px"></div>
<div class="vl" style="left:914px;top:504px;height:32px"></div>
<div class="vl" style="left:974px;top:504px;height:32px"></div>
<div class="td c" style="left:39px;width:28px;top:511px;">10</div>
<div class="nm" style="left:95px;width:263px;top:511px;">C.D. HONEYBALL FEMENINO</div>
<div class="rn c" style="left:358px;width:66px;top:509px;">13</div>
<div class="rn c" style="left:424px;width:66px;top:510px;">12</div>
<div class="rn c" style="left:490px;width:66px;top:510px;">4</div>
<div class="rn c" style="left:556px;width:66px;top:510px;">1</div>
<div class="rn c" style="left:622px;width:65px;top:510px;">7</div>
<div class="td c" style="left:688px;width:66px;top:512px;">29</div>
<div class="td c" style="left:754px;width:66px;top:512px;">19</div>
<div class="rn c" style="left:914px;width:60px;top:509px;">0</div>
<div class="bd" style="left:838px;width:9px;top:515px;background:#f28a8a">P</div>
<div class="bd" style="left:850px;width:9px;top:515px;background:#f28a8a">P</div>
<div class="bd" style="left:862px;width:9px;top:515px;background:#d6dc00">E</div>
<div class="bd" style="left:874px;width:9px;top:515px;background:#f28a8a">P</div>
<div class="bd" style="left:886px;width:10px;top:515px;background:#07ad2c">G</div>
<svg class="logo" style="top:504px" width="28" height="31" viewBox="0 0 28 31"><circle cx="14.5" cy="14.3" r="8.7" fill="#2f86dc"/><circle cx="14.5" cy="14.3" r="7" fill="#4a9ae6"/><g fill="#fff"><path d="M9 10.5 Q10.5 7.8 13 7.6 L13.2 10.5 L10.8 12Z"/><path d="M16 7.6 Q18.5 7.8 20 10.5 L18.2 12 L15.8 10.5Z"/><path d="M7.8 13 L10.3 12.8 L11.3 15.8 L8.2 16.2 Q7.6 14.5 7.8 13Z"/><path d="M21.2 13 L18.7 12.8 L17.7 15.8 L20.8 16.2 Q21.4 14.5 21.2 13Z"/><path d="M12 18.5 H17 L17.5 20.5 Q14.5 21.8 11.5 20.5Z"/></g><path d="M14.5 11 L17.3 13 L16.3 16 L12.7 16 L11.7 13Z" fill="#2f86dc"/><rect x="8" y="16.4" width="13" height="1.6" fill="#1d5fb5"/><rect x="9" y="16.9" width="11" height="0.6" fill="#cfe4ff"/></svg>
<div class="hl" style="top:549px;left:25px;width:950px"></div>
<div class="vl" style="left:25px;top:535px;height:15px"></div>
<div class="vl" style="left:39px;top:535px;height:15px"></div>
<div class="vl" style="left:974px;top:535px;height:15px"></div>
<div class="hl" style="top:581px;left:25px;width:950px"></div>
<div class="vl" style="left:25px;top:549px;height:33px"></div>
<div class="vl" style="left:39px;top:549px;height:33px"></div>
<div class="vl" style="left:67px;top:549px;height:33px"></div>
<div class="vl" style="left:95px;top:549px;height:33px"></div>
<div class="vl" style="left:358px;top:549px;height:33px"></div>
<div class="vl" style="left:424px;top:549px;height:33px"></div>
<div class="vl" style="left:490px;top:549px;height:33px"></div>
<div class="vl" style="left:556px;top:549px;height:33px"></div>
<div class="vl" style="left:622px;top:549px;height:33px"></div>
<div class="vl" style="left:687px;top:549px;height:33px"></div>
<div class="vl" style="left:753px;top:549px;height:33px"></div>
<div class="vl" style="left:819px;top:549px;height:33px"></div>
<div class="vl" style="left:914px;top:549px;height:33px"></div>
<div class="vl" style="left:974px;top:549px;height:33px"></div>
<div class="td c" style="left:39px;width:28px;top:557px;">11</div>
<div class="nm" style="left:95px;width:263px;top:557px;">C.D. RABESA</div>
<div class="rn c" style="left:358px;width:66px;top:555px;">13</div>
<div class="rn c" style="left:424px;width:66px;top:556px;">12</div>
<div class="rn c" style="left:490px;width:66px;top:556px;">4</div>
<div class="rn c" style="left:556px;width:66px;top:556px;">1</div>
<div class="rn c" style="left:622px;width:65px;top:556px;">7</div>
<div class="td c" style="left:688px;width:66px;top:558px;">16</div>
<div class="td c" style="left:754px;width:66px;top:558px;">28</div>
<div class="rn c" style="left:914px;width:60px;top:555px;">0</div>
<div class="bd" style="left:838px;width:9px;top:561px;background:#f28a8a">P</div>
<div class="bd" style="left:850px;width:9px;top:561px;background:#d6dc00">E</div>
<div class="bd" style="left:862px;width:9px;top:561px;background:#f28a8a">P</div>
<div class="bd" style="left:874px;width:9px;top:561px;background:#f28a8a">P</div>
<div class="bd" style="left:886px;width:9px;top:561px;background:#f28a8a">P</div>
<svg class="logo" style="top:549px" width="28" height="32" viewBox="0 0 28 32"><path d="M7.2 8.5 L8.6 6.2 Q11 7 14.5 6 Q18 7 20.4 6.2 L21.8 8.5 V17 Q21.3 23.3 14.5 25.8 Q7.7 23.3 7.2 17Z" fill="#f4c430" stroke="#a08030" stroke-width="0.5"/><path d="M9.5 10.5 Q14.5 7.5 19.5 10.5" stroke="#3a6a40" stroke-width="0.9" fill="none"/><circle cx="14.5" cy="14.8" r="3.2" fill="#3a2a10"/><circle cx="13.5" cy="14" r="0.9" fill="#d8a830"/><circle cx="15.6" cy="15.4" r="0.9" fill="#d8a830"/><path d="M9 18.5 L11.5 19.8 M20 18.5 L17.5 19.8" stroke="#d05060" stroke-width="1.4"/><path d="M10 13 L8.6 16 M19 13 L20.4 16" stroke="#6a5020" stroke-width="0.7"/></svg>
<div class="hl" style="top:619px;left:25px;width:950px"></div>
<div class="vl" style="left:25px;top:581px;height:39px"></div>
<div class="vl" style="left:39px;top:581px;height:39px"></div>
<div class="vl" style="left:67px;top:581px;height:39px"></div>
<div class="vl" style="left:95px;top:581px;height:39px"></div>
<div class="vl" style="left:358px;top:581px;height:39px"></div>
<div class="vl" style="left:424px;top:581px;height:39px"></div>
<div class="vl" style="left:490px;top:581px;height:39px"></div>
<div class="vl" style="left:556px;top:581px;height:39px"></div>
<div class="vl" style="left:622px;top:581px;height:39px"></div>
<div class="vl" style="left:687px;top:581px;height:39px"></div>
<div class="vl" style="left:753px;top:581px;height:39px"></div>
<div class="vl" style="left:819px;top:581px;height:39px"></div>
<div class="vl" style="left:914px;top:581px;height:39px"></div>
<div class="vl" style="left:974px;top:581px;height:39px"></div>
<div class="td c" style="left:39px;width:28px;top:589px;">12</div>
<div class="nm" style="left:95px;width:263px;top:589px;">A.D. SAN JOSE</div>
<div class="rn c" style="left:358px;width:66px;top:587px;">10</div>
<div class="rn c" style="left:424px;width:66px;top:588px;">12</div>
<div class="rn c" style="left:490px;width:66px;top:588px;">3</div>
<div class="rn c" style="left:556px;width:66px;top:588px;">1</div>
<div class="rn c" style="left:622px;width:65px;top:588px;">8</div>
<div class="td c" style="left:688px;width:66px;top:590px;">31</div>
<div class="td c" style="left:754px;width:66px;top:590px;">41</div>
<div class="rn c" style="left:914px;width:60px;top:587px;">0</div>
<div class="bd" style="left:837px;width:9px;top:593px;background:#f28a8a">P</div>
<div class="bd" style="left:849px;width:9px;top:593px;background:#f28a8a">P</div>
<div class="bd" style="left:861px;width:10px;top:593px;background:#07ad2c">G</div>
<div class="bd" style="left:874px;width:10px;top:593px;background:#07ad2c">G</div>
<div class="bd" style="left:887px;width:9px;top:593px;background:#f28a8a">P</div>
<svg class="logo" style="top:581px" width="28" height="38" viewBox="0 0 28 38"><path d="M8.3 13 L7.6 9 L10 10.6 L11.6 8.2 L13.2 10 L14.5 6.4 L15.8 10 L17.4 8.2 L19 10.6 L21.4 9 L20.7 13Z" fill="#e2b640"/><rect x="8.3" y="11.8" width="12.4" height="1.3" fill="#c89a30"/><circle cx="7.6" cy="9" r="0.8" fill="#eee"/><circle cx="21.4" cy="9" r="0.8" fill="#eee"/><circle cx="14.5" cy="6.4" r="0.8" fill="#d8a030"/><path d="M8.5 13.2 H20.5 V19.6 H8.5Z" fill="#ee1e40"/><path d="M8.5 19.6 H20.5 V22.5 Q20.2 26.8 14.5 27.6 Q8.8 26.8 8.5 22.5Z" fill="#2430d8"/><path d="M13.7 14.6 H15.3 V15.8 H16.6 V17.3 H15.3 V18.4 H13.7 V17.3 H12.4 V15.8 H13.7Z" fill="#fff"/><path d="M14.5 20.5 L15.6 23.3 L14.5 26 L13.4 23.3Z" fill="#e8b040"/><path d="M7.2 31.5 L9.6 28.2 H19.4 L21.8 31.5" stroke="#e8b040" stroke-width="1.2" fill="none"/><rect x="9.5" y="28" width="10" height="1.6" fill="#e6c060"/></svg>
<div class="hl" style="top:650px;left:25px;width:950px"></div>
<div class="vl" style="left:25px;top:619px;height:32px"></div>
<div class="vl" style="left:39px;top:619px;height:32px"></div>
<div class="vl" style="left:67px;top:619px;height:32px"></div>
<div class="vl" style="left:95px;top:619px;height:32px"></div>
<div class="vl" style="left:358px;top:619px;height:32px"></div>
<div class="vl" style="left:424px;top:619px;height:32px"></div>
<div class="vl" style="left:490px;top:619px;height:32px"></div>
<div class="vl" style="left:556px;top:619px;height:32px"></div>
<div class="vl" style="left:622px;top:619px;height:32px"></div>
<div class="vl" style="left:687px;top:619px;height:32px"></div>
<div class="vl" style="left:753px;top:619px;height:32px"></div>
<div class="vl" style="left:819px;top:619px;height:32px"></div>
<div class="vl" style="left:914px;top:619px;height:32px"></div>
<div class="vl" style="left:974px;top:619px;height:32px"></div>
<div class="td c" style="left:39px;width:28px;top:627px;">13</div>
<div class="nm" style="left:95px;width:263px;top:627px;">C.D. GOLDEN TEAM</div>
<div class="rn c" style="left:358px;width:66px;top:625px;">10</div>
<div class="rn c" style="left:424px;width:66px;top:626px;">12</div>
<div class="rn c" style="left:490px;width:66px;top:626px;">3</div>
<div class="rn c" style="left:556px;width:66px;top:626px;">1</div>
<div class="rn c" style="left:622px;width:65px;top:626px;">8</div>
<div class="td c" style="left:688px;width:66px;top:628px;">26</div>
<div class="td c" style="left:754px;width:66px;top:628px;">36</div>
<div class="rn c" style="left:914px;width:60px;top:625px;">0</div>
<div class="bd" style="left:837px;width:9px;top:631px;background:#f28a8a">P</div>
<div class="bd" style="left:849px;width:10px;top:631px;background:#07ad2c">G</div>
<div class="bd" style="left:862px;width:10px;top:631px;background:#07ad2c">G</div>
<div class="bd" style="left:875px;width:9px;top:631px;background:#f28a8a">P</div>
<div class="bd" style="left:887px;width:9px;top:631px;background:#f28a8a">P</div>
<svg class="logo" style="top:619px" width="28" height="31" viewBox="0 0 28 31"><circle cx="14.7" cy="14.7" r="8.6" fill="#222"/><circle cx="14.7" cy="14.7" r="7.7" fill="none" stroke="#a08050" stroke-width="0.6"/><circle cx="14.7" cy="14.7" r="6.2" fill="#1a1a1a"/><path d="M12.5 12 L16.9 17.4 M16.9 12 L12.5 17.4" stroke="#d4a44a" stroke-width="1.3"/><circle cx="10.5" cy="14.7" r="1.2" fill="none" stroke="#bbb" stroke-width="0.6"/><circle cx="18.9" cy="14.7" r="1.2" fill="none" stroke="#bbb" stroke-width="0.6"/></svg>
<div class="hl" style="top:681px;left:25px;width:950px"></div>
<div class="vl" style="left:25px;top:650px;height:32px"></div>
<div class="vl" style="left:39px;top:650px;height:32px"></div>
<div class="vl" style="left:67px;top:650px;height:32px"></div>
<div class="vl" style="left:95px;top:650px;height:32px"></div>
<div class="vl" style="left:358px;top:650px;height:32px"></div>
<div class="vl" style="left:424px;top:650px;height:32px"></div>
<div class="vl" style="left:490px;top:650px;height:32px"></div>
<div class="vl" style="left:556px;top:650px;height:32px"></div>
<div class="vl" style="left:622px;top:650px;height:32px"></div>
<div class="vl" style="left:687px;top:650px;height:32px"></div>
<div class="vl" style="left:753px;top:650px;height:32px"></div>
<div class="vl" style="left:819px;top:650px;height:32px"></div>
<div class="vl" style="left:914px;top:650px;height:32px"></div>
<div class="vl" style="left:974px;top:650px;height:32px"></div>
<div class="td c" style="left:39px;width:28px;top:658px;">14</div>
<div class="nm" style="left:95px;width:263px;top:658px;">J.D BORMUJOS</div>
<div class="rn c" style="left:358px;width:66px;top:656px;">7</div>
<div class="rn c" style="left:424px;width:66px;top:657px;">12</div>
<div class="rn c" style="left:490px;width:66px;top:657px;">1</div>
<div class="rn c" style="left:556px;width:66px;top:657px;">4</div>
<div class="rn c" style="left:622px;width:65px;top:657px;">7</div>
<div class="td c" style="left:688px;width:66px;top:659px;">11</div>
<div class="td c" style="left:754px;width:66px;top:659px;">41</div>
<div class="rn c" style="left:914px;width:60px;top:656px;">0</div>
<div class="bd" style="left:838px;width:9px;top:662px;background:#f28a8a">P</div>
<div class="bd" style="left:850px;width:9px;top:662px;background:#d6dc00">E</div>
<div class="bd" style="left:862px;width:9px;top:662px;background:#f28a8a">P</div>
<div class="bd" style="left:874px;width:9px;top:662px;background:#f28a8a">P</div>
<div class="bd" style="left:886px;width:9px;top:662px;background:#f28a8a">P</div>
<svg class="logo" style="top:650px" width="28" height="31" viewBox="0 0 28 31"><defs><clipPath id="cbor"><path d="M6 7 H23 V13 Q22.5 20 14.5 23 Q6.5 20 6 13Z"/></clipPath></defs><path d="M6 7 H23 V13 Q22.5 20 14.5 23 Q6.5 20 6 13Z" fill="#f6f6f6"/><g clip-path="url(#cbor)" fill="#111"><path d="M9.5 17 L11.3 15.8 V24 H9.5Z"/><path d="M12.8 14.9 L14.8 13.6 V24 H12.8Z"/><path d="M16.3 12.6 L18.3 11.3 V24 H16.3Z"/><path d="M19.8 10.4 L23 8.5 V24 H19.8Z"/><rect x="6" y="7" width="17" height="1.2" fill="#666"/></g><path d="M6 7 H23 V13 Q22.5 20 14.5 23 Q6.5 20 6 13Z" fill="none" stroke="#555" stroke-width="0.6"/><circle cx="17" cy="8.8" r="1.2" fill="#2fa64a"/><circle cx="9.5" cy="11.5" r="0.9" fill="#e0a030"/></svg>
<div class="hl" style="top:715px;left:25px;width:950px"></div>
<div class="vl" style="left:25px;top:681px;height:35px"></div>
<div class="vl" style="left:39px;top:681px;height:35px"></div>
<div class="vl" style="left:67px;top:681px;height:35px"></div>
<div class="vl" style="left:95px;top:681px;height:35px"></div>
<div class="vl" style="left:358px;top:681px;height:35px"></div>
<div class="vl" style="left:424px;top:681px;height:35px"></div>
<div class="vl" style="left:490px;top:681px;height:35px"></div>
<div class="vl" style="left:556px;top:681px;height:35px"></div>
<div class="vl" style="left:622px;top:681px;height:35px"></div>
<div class="vl" style="left:687px;top:681px;height:35px"></div>
<div class="vl" style="left:753px;top:681px;height:35px"></div>
<div class="vl" style="left:819px;top:681px;height:35px"></div>
<div class="vl" style="left:914px;top:681px;height:35px"></div>
<div class="vl" style="left:974px;top:681px;height:35px"></div>
<div class="td c" style="left:39px;width:28px;top:689px;">15</div>
<div class="nm" style="left:95px;width:263px;top:689px;">U.D. MORON C.F.</div>
<div class="rn c" style="left:358px;width:66px;top:687px;">0</div>
<div class="rn c" style="left:424px;width:66px;top:688px;">12</div>
<div class="rn c" style="left:490px;width:66px;top:688px;">0</div>
<div class="rn c" style="left:556px;width:66px;top:688px;">0</div>
<div class="rn c" style="left:622px;width:65px;top:688px;">12</div>
<div class="td c" style="left:688px;width:66px;top:690px;">3</div>
<div class="td c" style="left:754px;width:66px;top:690px;">98</div>
<div class="rn c" style="left:914px;width:60px;top:687px;">0</div>
<div class="bd" style="left:838px;width:9px;top:693px;background:#f28a8a">P</div>
<div class="bd" style="left:850px;width:9px;top:693px;background:#f28a8a">P</div>
<div class="bd" style="left:862px;width:9px;top:693px;background:#f28a8a">P</div>
<div class="bd" style="left:874px;width:9px;top:693px;background:#f28a8a">P</div>
<div class="bd" style="left:886px;width:9px;top:693px;background:#f28a8a">P</div>
<svg class="logo" style="top:681px" width="28" height="34" viewBox="0 0 28 34"><defs><clipPath id="cmor"><path d="M6.5 11 L14.2 7.1 L22 11 V19.5 Q21.5 25.5 14.2 27.8 Q7 25.5 6.5 19.5Z"/></clipPath></defs><g clip-path="url(#cmor)"><rect x="6" y="6" width="17" height="23" fill="#fff"/><rect x="6" y="6" width="8.2" height="10.8" fill="#dc3a26"/><rect x="14.2" y="6" width="8" height="10.8" fill="#2d3a9a"/><rect x="6" y="17.6" width="17" height="0.9" fill="#555"/><g fill="#e0382a"><rect x="7.5" y="19" width="1.5" height="9"/><rect x="10.5" y="19" width="1.6" height="9"/><rect x="16.3" y="19" width="1.6" height="9"/><rect x="19.5" y="19" width="1.5" height="9"/><rect x="13.5" y="25" width="1.4" height="3"/></g></g><path d="M6.5 11 L14.2 7.1 L22 11 V19.5 Q21.5 25.5 14.2 27.8 Q7 25.5 6.5 19.5Z" fill="none" stroke="#e8b050" stroke-width="0.5"/><circle cx="14.2" cy="22.3" r="2.3" fill="#f4f4f4"/><circle cx="13.4" cy="22.8" r="0.8" fill="#222"/><circle cx="15.2" cy="21.6" r="0.7" fill="#222"/><path d="M16.5 13 L18 12.5 L19.5 13 L18 14Z" fill="#e8b040"/><rect x="8" y="13.5" width="4" height="1.5" fill="#b07040"/></svg>
<div class="hl" style="top:729px;left:25px;width:950px"></div>
<div class="vl" style="left:25px;top:715px;height:15px"></div>
<div class="vl" style="left:39px;top:715px;height:15px"></div>
<div class="vl" style="left:974px;top:715px;height:15px"></div>
<div class="hl" style="top:760px;left:25px;width:950px"></div>
<div class="vl" style="left:25px;top:729px;height:32px"></div>
<div class="vl" style="left:39px;top:729px;height:32px"></div>
<div class="vl" style="left:67px;top:729px;height:32px"></div>
<div class="vl" style="left:95px;top:729px;height:32px"></div>
<div class="vl" style="left:358px;top:729px;height:32px"></div>
<div class="vl" style="left:424px;top:729px;height:32px"></div>
<div class="vl" style="left:490px;top:729px;height:32px"></div>
<div class="vl" style="left:556px;top:729px;height:32px"></div>
<div class="vl" style="left:622px;top:729px;height:32px"></div>
<div class="vl" style="left:687px;top:729px;height:32px"></div>
<div class="vl" style="left:753px;top:729px;height:32px"></div>
<div class="vl" style="left:819px;top:729px;height:32px"></div>
<div class="vl" style="left:914px;top:729px;height:32px"></div>
<div class="vl" style="left:974px;top:729px;height:32px"></div>
<div class="td c" style="left:39px;width:28px;top:737px;">16</div>
<div class="nm" style="left:95px;width:263px;top:737px;">U.D. FUENTE DEL REY</div>
<div class="rn c" style="left:358px;width:66px;top:735px;">0</div>
<div class="rn c" style="left:424px;width:66px;top:736px;">12</div>
<div class="rn c" style="left:490px;width:66px;top:736px;">0</div>
<div class="rn c" style="left:556px;width:66px;top:736px;">0</div>
<div class="rn c" style="left:622px;width:65px;top:736px;">12</div>
<div class="td c" style="left:688px;width:66px;top:738px;">3</div>
<div class="td c" style="left:754px;width:66px;top:738px;">117</div>
<div class="rn c" style="left:914px;width:60px;top:735px;">0</div>
<div class="bd" style="left:838px;width:9px;top:741px;background:#f28a8a">P</div>
<div class="bd" style="left:850px;width:9px;top:741px;background:#f28a8a">P</div>
<div class="bd" style="left:862px;width:9px;top:741px;background:#f28a8a">P</div>
<div class="bd" style="left:874px;width:9px;top:741px;background:#f28a8a">P</div>
<div class="bd" style="left:886px;width:9px;top:741px;background:#f28a8a">P</div>
<svg class="logo" style="top:729px" width="28" height="31" viewBox="0 0 28 31"><circle cx="14.5" cy="15.3" r="8.6" fill="#12405e"/><circle cx="14.5" cy="15.3" r="7.4" fill="none" stroke="#3a8cc0" stroke-width="0.6" stroke-dasharray="1 1.2"/><circle cx="14.5" cy="15.3" r="6.4" fill="#eef4f4"/><path d="M10.9 11.4 H18.1 V16 Q17.9 19.8 14.5 20.6 Q11.1 19.8 10.9 16Z" fill="#7cc0e8"/><rect x="14.5" y="11.4" width="3.6" height="4.4" fill="#eab040"/><path d="M10.9 15.8 H14.5 V20.5 Q11.2 19.8 10.9 16Z" fill="#f2e060"/><path d="M14.5 15.8 H18.1 V16 Q17.9 19.8 14.5 20.5Z" fill="#9ad070"/></svg>
</body></html>
